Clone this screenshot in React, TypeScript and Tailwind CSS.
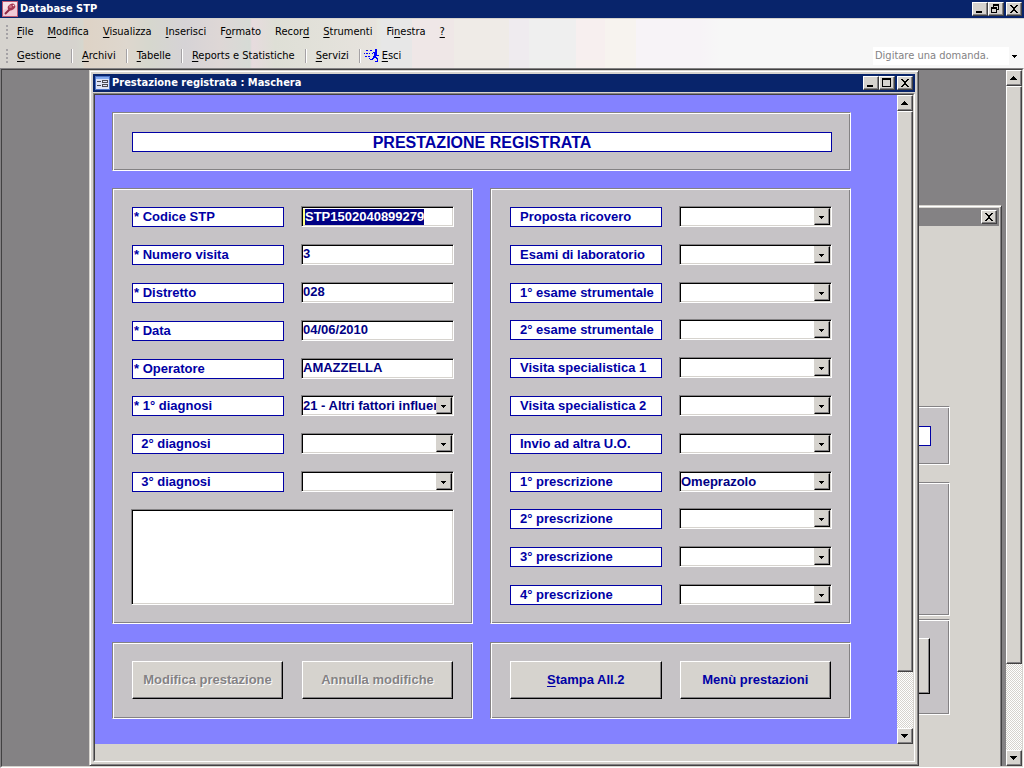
import { useEffect, useRef, type ReactNode } from 'react'

const uiFont = "font-['DejaVu_Sans_Condensed','DejaVu_Sans',sans-serif]"
const formFont = "font-['Liberation_Sans',Arial,sans-serif]"

const raised =
  'border border-t-white border-l-white border-r-[#424142] border-b-[#424142] bg-[#d6d3ce] shadow-[inset_-1px_-1px_0_#848284]'
const panel =
  'border border-t-[#848284] border-l-[#848284] border-r-white border-b-white bg-[#c6c3c6] shadow-[inset_1px_1px_0_#fff,inset_-1px_-1px_0_#848284]'
const sunken =
  'border border-t-[#848284] border-l-[#848284] border-r-white border-b-white bg-white shadow-[inset_1px_1px_0_#000,inset_-1px_-1px_0_#d6d3ce]'
const frame =
  'border border-t-[#d6d3ce] border-l-[#d6d3ce] border-r-[#424142] border-b-[#424142] bg-[#d6d3ce] shadow-[inset_1px_1px_0_#fff,inset_-1px_-1px_0_#848284]'

const menus = [
  ['', 'F', 'ile'],
  ['', 'M', 'odifica'],
  ['', 'V', 'isualizza'],
  ['', 'I', 'nserisci'],
  ['F', 'o', 'rmato'],
  ['Recor', 'd', ''],
  ['', 'S', 'trumenti'],
  ['Fi', 'n', 'estra'],
  ['', '?', ''],
]

const tools = [
  ['', 'G', 'estione'],
  ['', 'A', 'rchivi'],
  ['', 'T', 'abelle'],
  ['', 'R', 'eports e Statistiche'],
  ['', 'S', 'ervizi'],
]

const leftFields = [
  { id: 'codice', label: '* Codice STP', value: 'STP1502040899279' },
  { id: 'visita', label: '* Numero visita', value: '3' },
  { id: 'distretto', label: '* Distretto', value: '028' },
  { id: 'data', label: '* Data', value: '04/06/2010' },
  { id: 'operatore', label: '* Operatore', value: 'AMAZZELLA' },
]

const diagnosi = [
  { id: 'diagnosi1', label: '* 1° diagnosi', value: '21 - Altri fattori influenzanti' },
  { id: 'diagnosi2', label: '  2° diagnosi', value: '' },
  { id: 'diagnosi3', label: '  3° diagnosi', value: '' },
]

const rightFields = [
  { id: 'ricovero', label: 'Proposta ricovero', value: '' },
  { id: 'esami', label: 'Esami di laboratorio', value: '' },
  { id: 'esame1', label: '1° esame strumentale', value: '' },
  { id: 'esame2', label: '2° esame strumentale', value: '' },
  { id: 'spec1', label: 'Visita specialistica 1', value: '' },
  { id: 'spec2', label: 'Visita specialistica 2', value: '' },
  { id: 'invio', label: 'Invio ad altra U.O.', value: '' },
  { id: 'presc1', label: '1° prescrizione', value: 'Omeprazolo' },
  { id: 'presc2', label: '2° prescrizione', value: '' },
  { id: 'presc3', label: '3° prescrizione', value: '' },
  { id: 'presc4', label: '4° prescrizione', value: '' },
]

function Mnemonic({ parts }: { parts: string[] }) {
  return (
    <>
      {parts[0]}
      <span className="underline underline-offset-2">{parts[1]}</span>
      {parts[2]}
    </>
  )
}

function CaptionButton({ kind }: { kind: 'min' | 'max' | 'restore' | 'close' }) {
  return (
    <button aria-label={kind} className={`h-[14px] w-4 shrink-0 ${raised}`}>
      <svg width="14" height="12" viewBox="0 0 14 12" shapeRendering="crispEdges">
        {kind === 'min' && <path d="M3 8h6v2H3z" />}
        {kind === 'max' && <path fillRule="evenodd" d="M2 1h9v9H2zM3 3v6h7V3z" />}
        {kind === 'restore' && (
          <path fillRule="evenodd" d="M4 1h6v6H8V6h1V3H5v1H4zM2 4h6v6H2zM3 6v3h4V6z" />
        )}
        {kind === 'close' && (
          <path d="M3 2h2v1h1v1h2V3h1V2h2v1h-1v1H9v1H8v2h1v1h1v1h1v1H9V9H8V8H6v1H5v1H3V9h1V8h1V7h1V5H5V4H4V3H3z" />
        )}
      </svg>
    </button>
  )
}

function Scrollbar({ thumb }: { thumb: string }) {
  return (
    <div className="flex w-4 shrink-0 flex-col bg-[repeating-conic-gradient(#fff_0_25%,#d6d3ce_0_50%)] bg-[length:2px_2px]">
      <button aria-label="Su" className={`h-4 w-4 ${raised}`}>
        <svg width="14" height="14" viewBox="0 0 14 14" shapeRendering="crispEdges">
          <path d="M6 5h1v1h1v1h1v1h1v1H3V8h1V7h1V6h1z" />
        </svg>
      </button>
      <div className="flex-1">
        <div className={`w-4 ${thumb} ${raised}`} />
      </div>
      <button aria-label="Giù" className={`h-4 w-4 ${raised}`}>
        <svg width="14" height="14" viewBox="0 0 14 14" shapeRendering="crispEdges">
          <path d="M3 5h7v1H9v1H8v1H7v1H6V8H5V7H4V6H3z" />
        </svg>
      </button>
    </div>
  )
}

function Grip() {
  return (
    <div className="flex w-[3px] flex-col gap-[2px]">
      <span className="h-[2px] w-[2px] bg-[#a5a2a5]" />
      <span className="h-[2px] w-[2px] bg-[#a5a2a5]" />
      <span className="h-[2px] w-[2px] bg-[#a5a2a5]" />
      <span className="h-[2px] w-[2px] bg-[#a5a2a5]" />
    </div>
  )
}

function KeyIcon() {
  return (
    <svg width="16" height="16" viewBox="0 0 16 16" className="shrink-0">
      <rect width="16" height="16" fill="#bd5973" />
      <rect x="1" y="1" width="14" height="14" fill="#f7e3e7" />
      <path d="M1 15V9l14-5v11z" fill="#efcbd6" />
      <path d="M8.500 7.500L3 13" stroke="#8c2842" strokeWidth="2" />
      <ellipse cx="9.500" cy="6" rx="4" ry="3" transform="rotate(-35 9.500 6)" fill="#a53852" />
      <circle cx="8.500" cy="5.500" r="1.500" fill="#ce7184" />
      <circle cx="11.500" cy="4.500" r=".8" fill="#f7e3e7" />
    </svg>
  )
}

function FormIcon() {
  return (
    <svg width="15" height="14" viewBox="0 0 15 14" className="shrink-0" shapeRendering="crispEdges">
      <rect width="15" height="14" fill="#4a71c6" />
      <rect x="1" y="1" width="13" height="2" fill="#84aaef" />
      <rect x="1" y="3" width="13" height="10" fill="#dee3f7" />
      <path d="M2 5h4v1H2zM2 9h4v1H2z" fill="#4a4952" />
      <path fillRule="evenodd" d="M7 4h6v3H7zM8 5v1h4V5zM7 8h6v3H7zM8 9v1h4V9z" fill="#4a4952" />
    </svg>
  )
}

function RunnerIcon() {
  return (
    <svg width="16" height="15" viewBox="0 0 16 15" shapeRendering="crispEdges">
      <path
        fill="#0000ff"
        d="M11 0h2v3h-2zM9 3h4v1H9zM8 4h1v1H8zM10 4h3v3h-3zM13 6h2v1h-2zM9 7h3v1H9zM9 8h4v1H9zM12 9h2v1h-2zM13 10h1v3h-1zM11 12h2v1h-2zM8 9h2v1H8zM6 10h3v1H6zM5 9h1v1H5zM2 1h2v1H2zM6 1h2v1H6zM0 4h1v1H0zM2 4h2v1H2zM5 4h1v1H5zM1 7h2v1H1zM4 7h2v1H4z"
      />
    </svg>
  )
}

function TitleBar({ icon, title, children }: { icon: ReactNode; title: string; children: ReactNode }) {
  return (
    <div className="flex h-[18px] shrink-0 items-center gap-[2px] bg-[#08246b] px-[2px]">
      {icon}
      <span className={`flex-1 text-[11px] font-bold leading-4 text-white ${uiFont}`}>{title}</span>
      {children}
    </div>
  )
}

function FieldLabel({ id, indent, children }: { id: string; indent: string; children: ReactNode }) {
  return (
    <label
      htmlFor={id}
      className={`h-5 overflow-hidden whitespace-pre border border-[#0000a5] bg-white text-[13px] font-bold leading-[18px] text-[#0000a5] ${indent}`}
    >
      {children}
    </label>
  )
}

function Combo({ id, value }: { id: string; value: string }) {
  return (
    <div className={`relative flex h-[21px] min-w-0 p-px ${sunken}`}>
      <select
        id={id}
        defaultValue={value}
        className="mr-4 w-full min-w-0 appearance-none bg-transparent text-[13px] font-bold leading-[17px] text-[#000084] outline-none"
      >
        <option value={value}>{value}</option>
      </select>
      <span className="pointer-events-none absolute inset-y-px right-px w-4 border border-t-[#d6d3ce] border-l-[#d6d3ce] border-r-black border-b-black bg-[#d6d3ce] shadow-[inset_-1px_-1px_0_#848284]">
        <svg width="14" height="15" viewBox="0 0 14 15" shapeRendering="crispEdges">
          <path d="M4 7h5v1H8v1H7v1H6V9H5V8H4z" />
        </svg>
      </span>
    </div>
  )
}

function PushButton({ disabled, children }: { disabled?: boolean; children: ReactNode }) {
  return (
    <button
      disabled={disabled}
      className="h-[38px] border border-t-white border-l-white border-r-black border-b-black bg-[#d6d3ce] text-[13px] font-bold text-[#0000a5] shadow-[inset_-1px_-1px_0_#848284] disabled:text-[#848284] disabled:[text-shadow:1px_1px_0_#fff]"
    >
      {children}
    </button>
  )
}

function FieldRow({ children }: { children: ReactNode }) {
  return <div className="grid grid-cols-[152px_minmax(0,1fr)] items-end gap-x-[17px]">{children}</div>
}

function BackWindow() {
  return (
    <div className="absolute top-[135px] right-1 bottom-0 left-1/2 flex flex-col border border-b-0 border-t-[#d6d3ce] border-l-[#d6d3ce] border-r-[#424142] bg-[#d6d3ce] px-[2px] pt-[2px] shadow-[inset_1px_1px_0_#fff,inset_-1px_0_0_#848284]">
      <div className="flex h-[18px] items-center justify-end bg-[#848284] px-[2px]">
        <CaptionButton kind="close" />
      </div>
      <div className="mt-[180px] mr-[49px] flex flex-col">
        <div className={`h-[59px] px-[18px] py-[19px] ${panel}`}>
          <div className="h-5 border border-[#0000a5] bg-white" />
        </div>
        <div className={`mt-[17px] h-[134px] ${panel}`} />
        <div className={`mt-[3px] h-24 px-[19px] py-[18px] ${panel}`}>
          <div className="h-14 border border-r-black border-b-black border-t-white bg-[#d6d3ce] shadow-[inset_-1px_-1px_0_#848284]" />
        </div>
      </div>
    </div>
  )
}

function FormWindow() {
  const codice = useRef<HTMLInputElement>(null)

  useEffect(() => {
    codice.current?.focus()
    codice.current?.select()
  }, [])

  return (
    <div className={`absolute inset-x-[87px] inset-y-0 flex flex-col p-[3px] ${frame}`}>
      <TitleBar icon={<FormIcon />} title="Prestazione registrata : Maschera">
        <div className="flex">
          <CaptionButton kind="min" />
          <CaptionButton kind="max" />
        </div>
        <CaptionButton kind="close" />
      </TitleBar>
      <div className="mt-px flex min-h-0 flex-1 flex-col border border-t-[#848284] border-l-[#848284] border-r-white border-b-white">
        <div className="flex min-h-0 flex-1 flex-col border border-t-[#424142] border-l-[#424142] border-r-[#d6d3ce] border-b-[#d6d3ce]">
          <div className="flex min-h-0 flex-1">
            <form className={`min-w-0 flex-1 overflow-hidden bg-[#8482ff] pt-[17px] pr-[46px] pl-[17px] ${formFont}`}>
              <div className={`pt-[19px] pr-[18px] pb-[18px] pl-[19px] ${panel}`}>
                <h1 className="h-5 border border-[#0000a5] bg-white text-center text-[16px] font-bold leading-5 text-[#0000a5]">
                  PRESTAZIONE REGISTRATA
                </h1>
              </div>

              <div className="mt-[17px] grid grid-cols-2 gap-x-[17px] gap-y-[18px]">
                <div className={`flex min-h-[436px] flex-col justify-between pt-[17px] pr-[18px] pb-[18px] pl-[19px] ${panel}`}>
                  {leftFields.map((f, i) => (
                    <FieldRow key={f.id}>
                      <FieldLabel id={f.id} indent="pl-px">{f.label}</FieldLabel>
                      <div className={`flex h-[21px] min-w-0 items-center p-px ${sunken}`}>
                        <input
                          id={f.id}
                          ref={i === 0 ? codice : undefined}
                          defaultValue={f.value}
                          className="w-full min-w-0 bg-transparent text-[13px] font-bold leading-4 text-[#000084] outline-none selection:bg-[#000084] selection:text-white focus:border-l-2 focus:border-[#ffff84]"
                        />
                      </div>
                    </FieldRow>
                  ))}
                  {diagnosi.map((f) => (
                    <FieldRow key={f.id}>
                      <FieldLabel id={f.id} indent="pl-px">{f.label}</FieldLabel>
                      <Combo id={f.id} value={f.value} />
                    </FieldRow>
                  ))}
                  <textarea aria-label="Note" className={`-ml-px block h-24 resize-none outline-none ${sunken}`} />
                </div>

                <div className={`flex min-h-[436px] flex-col justify-between pt-[17px] pr-[18px] pb-[18px] pl-[19px] ${panel}`}>
                  {rightFields.map((f) => (
                    <FieldRow key={f.id}>
                      <FieldLabel id={f.id} indent="pl-[9px]">{f.label}</FieldLabel>
                      <Combo id={f.id} value={f.value} />
                    </FieldRow>
                  ))}
                </div>

                <div className={`grid grid-cols-2 gap-[19px] pt-[18px] pr-[19px] pb-[19px] pl-[19px] ${panel}`}>
                  <PushButton disabled>Modifica prestazione</PushButton>
                  <PushButton disabled>Annulla modifiche</PushButton>
                </div>

                <div className={`grid grid-cols-2 gap-[18px] pt-[18px] pr-[19px] pb-[19px] pl-[19px] ${panel}`}>
                  <PushButton>
                    <Mnemonic parts={['', 'S', 'tampa All.2']} />
                  </PushButton>
                  <PushButton>Menù prestazioni</PushButton>
                </div>
              </div>
            </form>
            <Scrollbar thumb="h-[91%]" />
          </div>
          <div className="h-4 shrink-0 bg-[#d6d3ce]" />
        </div>
      </div>
    </div>
  )
}

export default function App() {
  return (
    <div className={`flex h-screen min-h-[768px] flex-col overflow-hidden bg-[#d6d3ce] text-[11px] leading-4 text-black ${uiFont}`}>
      <TitleBar icon={<KeyIcon />} title="Database STP">
        <div className="flex">
          <CaptionButton kind="min" />
          <CaptionButton kind="restore" />
        </div>
        <CaptionButton kind="close" />
      </TitleBar>

      <header className="border-t border-[#d6d3ce] bg-[linear-gradient(to_right,#d6d3ce_75px,#d6d7ce_83px,#ded3c6_84px,#ded7ce_127px,#d6d7ce_150px,#d6d3d6_185px,#ded7d6_220px,#d6dbd6_250px,#e7dbde_252px,#dedfd6_275px,#e7e3de_376px,#e7e7de_377px,#e7e7e7_382px,#e7e7e7_412px,#efe7e7_412px,#efe7e7_454px,#efebe7_454px,#efebe7_509px,#efebef_509px,#efebef_529px,#efefef_529px,#efefef_576px,#f7efef_576px,#f7efef_605px,#f7f3ef_605px,#f7f3ef_636px,#f7f3f7_636px,#f7f3f7_700px,#f7f7f7_720px)] pb-px">
        <nav className="flex h-6 items-center gap-[14px] pt-[2px] pl-[6px]">
          <div className="-mr-[6px]">
            <Grip />
          </div>
          {menus.map((m) => (
            <button key={m.join('')}>
              <Mnemonic parts={m} />
            </button>
          ))}
        </nav>
        <div className="flex h-6 items-center pt-[2px] pl-[6px]">
          <Grip />
          <div className="flex flex-1 items-center gap-[9px] pl-2">
            {tools.map((t) => (
              <div key={t.join('')} className="flex items-center gap-[10px]">
                <button>
                  <Mnemonic parts={t} />
                </button>
                <span className="h-[14px] w-[2px] border-r border-l border-r-white border-l-[#a5a2a5]" />
              </div>
            ))}
            <button className="-ml-[6px] flex items-center gap-[2px]">
              <RunnerIcon />
              <span>
                <Mnemonic parts={['', 'E', 'sci']} />
              </span>
            </button>
          </div>
          <div className="mr-1 flex h-[18px] w-[147px] bg-white">
            <input
              aria-label="Domanda"
              placeholder="Digitare una domanda."
              className="min-w-0 flex-1 bg-transparent pl-[2px] outline-none placeholder:text-[#848284]"
            />
            <button aria-label="Apri" className="w-[11px] bg-[#f7f7f7]">
              <svg width="11" height="18" viewBox="0 0 11 18" shapeRendering="crispEdges">
                <path d="M3 8h5v1H7v1H6v1H5v-1H4V9H3z" />
              </svg>
            </button>
          </div>
        </div>
      </header>

      <main className="flex min-h-0 flex-1 border border-t-[#848284] border-l-[#848284] border-r-white border-b-white">
        <div className="flex min-w-0 flex-1 border border-t-[#424142] border-l-[#424142] border-r-[#d6d3ce] border-b-[#d6d3ce]">
          <div className="relative min-w-0 flex-1 overflow-hidden bg-[#848284]">
            <BackWindow />
            <FormWindow />
          </div>
          <Scrollbar thumb="h-[87%]" />
        </div>
      </main>
    </div>
  )
}
